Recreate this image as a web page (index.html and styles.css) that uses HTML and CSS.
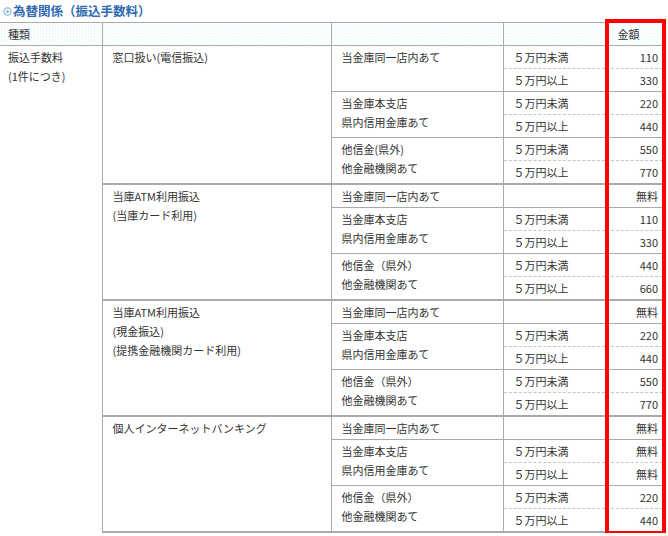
FILE: index.html
```html
<!DOCTYPE html>
<html lang="ja">
<head>
<meta charset="utf-8">
<title>為替関係（振込手数料）</title>
<link rel="stylesheet" href="styles.css">
</head>
<body>
<div class="wrap">
  <h2 class="title"><svg class="mark" width="9" height="9" viewBox="0 0 9 9"><circle cx="4.5" cy="4.5" r="3.6" fill="none" stroke="#8fb7e3" stroke-width="1.2"/><circle cx="4.5" cy="4.5" r="1.6" fill="#8fb7e3"/></svg>為替関係（振込手数料）</h2>
  <table class="fee">
    <colgroup><col class="w1"><col class="w2"><col class="w3"><col class="w4"><col class="w5"></colgroup>
    <thead>
      <tr><th class="c1">種類</th><th></th><th></th><th></th><th class="c5h">金額</th></tr>
    </thead>
    <tbody>
      <tr><td class="c1" rowspan="21">振込手数料<br>(1件につき)</td><td class="c2" rowspan="6">窓口扱い(電信振込)</td><td class="c3" rowspan="2">当金庫同一店内あて</td><td class="c4">５万円未満</td><td class="c5">110</td></tr>
      <tr class="sub"><td class="c4">５万円以上</td><td class="c5">330</td></tr>
      <tr><td class="c3" rowspan="2">当金庫本支店<br>県内信用金庫あて</td><td class="c4">５万円未満</td><td class="c5">220</td></tr>
      <tr class="sub"><td class="c4">５万円以上</td><td class="c5">440</td></tr>
      <tr><td class="c3" rowspan="2">他信金(県外)<br>他金融機関あて</td><td class="c4">５万円未満</td><td class="c5">550</td></tr>
      <tr class="sub"><td class="c4">５万円以上</td><td class="c5">770</td></tr>

      <tr class="grp"><td class="c2" rowspan="5">当庫ATM利用振込<br>(当庫カード利用)</td><td class="c3">当金庫同一店内あて</td><td class="c4"></td><td class="c5">無料</td></tr>
      <tr><td class="c3" rowspan="2">当金庫本支店<br>県内信用金庫あて</td><td class="c4">５万円未満</td><td class="c5">110</td></tr>
      <tr class="sub"><td class="c4">５万円以上</td><td class="c5">330</td></tr>
      <tr><td class="c3" rowspan="2">他信金（県外）<br>他金融機関あて</td><td class="c4">５万円未満</td><td class="c5">440</td></tr>
      <tr class="sub"><td class="c4">５万円以上</td><td class="c5">660</td></tr>

      <tr class="grp"><td class="c2" rowspan="5">当庫ATM利用振込<br>(現金振込)<br>(提携金融機関カード利用)</td><td class="c3">当金庫同一店内あて</td><td class="c4"></td><td class="c5">無料</td></tr>
      <tr><td class="c3" rowspan="2">当金庫本支店<br>県内信用金庫あて</td><td class="c4">５万円未満</td><td class="c5">220</td></tr>
      <tr class="sub"><td class="c4">５万円以上</td><td class="c5">440</td></tr>
      <tr><td class="c3" rowspan="2">他信金（県外）<br>他金融機関あて</td><td class="c4">５万円未満</td><td class="c5">550</td></tr>
      <tr class="sub"><td class="c4">５万円以上</td><td class="c5">770</td></tr>

      <tr class="grp"><td class="c2 endc" rowspan="5">個人インターネットバンキング</td><td class="c3">当金庫同一店内あて</td><td class="c4"></td><td class="c5">無料</td></tr>
      <tr><td class="c3" rowspan="2">当金庫本支店<br>県内信用金庫あて</td><td class="c4">５万円未満</td><td class="c5">無料</td></tr>
      <tr class="sub"><td class="c4">５万円以上</td><td class="c5">無料</td></tr>
      <tr><td class="c3 endc" rowspan="2">他信金（県外）<br>他金融機関あて</td><td class="c4">５万円未満</td><td class="c5">220</td></tr>
      <tr class="sub"><td class="c4 endc">５万円以上</td><td class="c5 endc">440</td></tr>
    </tbody>
  </table>
  <div class="highlight"></div>
</div>
</body>
</html>
```

FILE: styles.css
```css
html, body {
  margin: 0;
  padding: 0;
  background: #fff;
}
body {
  font-family: "Noto Sans CJK JP", "Noto Sans", sans-serif;
  font-size: 11px;
  color: #333;
}
.wrap {
  position: relative;
  width: 668px;
}
.title {
  margin: 0;
  height: 22px;
  line-height: 20px;
  font-size: 12.5px;
  font-weight: bold;
  color: #2f6ab3;
  padding-left: 3px;
  display: flex;
  align-items: center;
  gap: 1px;
}
.mark {
  flex: none;
  margin-top: 1px;
}
.fee {
  border-collapse: collapse;
  table-layout: fixed;
  width: 663px;
}
.w1 { width: 102px; }
.w2 { width: 229px; }
.w3 { width: 172px; }
.w4 { width: 102px; }
.w5 { width: 58px; }

.fee th, .fee td {
  border-top: 1px solid #aaa;
  border-left: 1px solid #aaa;
  padding: 2px 5px 1px 10px;
  line-height: 19px;
  vertical-align: top;
  text-align: left;
  font-weight: normal;
  white-space: nowrap;
}
.fee th {
  background-color: #fdffff;
  background-image: radial-gradient(circle, #d3f1f4 0.75px, transparent 1px);
  background-size: 3px 3px;
  border-bottom: 1px solid #aaa;
}
.fee .c1 {
  border-left: none;
  padding-left: 8px;
}
.fee th.c5h {
  padding-left: 12px;
}
.fee td.c5 {
  text-align: right;
  padding-right: 5px;
  padding-left: 0;
}
.fee tr.sub td {
  border-top: 1px dashed #c4c4c4;
}
.fee tr.grp td {
  border-top: 2px solid #aaa;
}
.fee td.endc {
  border-bottom: 2px solid #aaa;
}
.highlight {
  position: absolute;
  left: 605px;
  top: 19px;
  width: 61px;
  height: 516px;
  border: 4px solid #f00;
  box-sizing: border-box;
}
```
